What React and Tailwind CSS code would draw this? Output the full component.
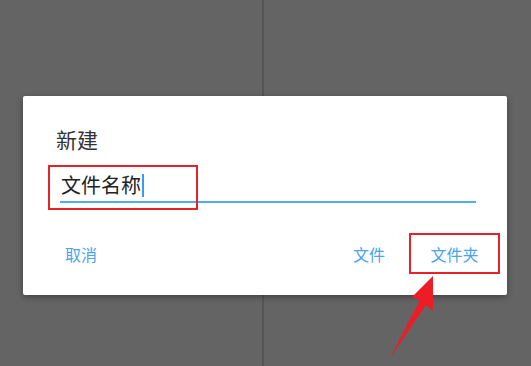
import React from "react";

export default function App() {
  return (
    <div
      className="relative w-[531px] h-[366px] overflow-hidden bg-[#646464]"
      style={{ fontFamily: '"Noto Sans CJK SC", "Noto Sans", sans-serif' }}
    >
      {/* background panels */}
      <div className="flex h-full">
        <div className="w-[264px] h-full border-r-[2px] border-[#555555]" />
        <div className="flex-1 h-full" />
      </div>

      {/* dialog */}
      <div className="absolute left-[23px] top-[96px] w-[484px] h-[199px] bg-white rounded-[2px] shadow-[0_2px_6px_rgba(0,0,0,0.35)] flex flex-col">
        <div className="pl-[33px] pt-[28px] text-[21px] leading-[30px] text-[#333333]">新建</div>
        <div className="relative mt-[15px] ml-[37px] mr-[31px] h-[34px] border-b-2 border-[#53a9f3] flex items-center">
          <span className="text-[20px] leading-[28px] text-[#222222] ml-[1px]">文件名称</span>
          <span className="w-[2px] h-[23px] bg-[#3d9bf0] ml-[1px]" />
          <div className="absolute left-[-12px] top-[-4px] w-[150px] h-[45px] border-2 border-[#e5242a]" />
        </div>
        <div className="flex items-center mt-[30px] pl-[42px] pr-[7px] text-[16px] text-[#4aa3ef]">
          <span>取消</span>
          <span className="ml-auto">文件</span>
          <div className="relative ml-[24px] w-[91px] h-[41px] flex items-center justify-center">
            <span>文件夹</span>
            <div className="absolute inset-0 border-2 border-[#e5242a]" />
          </div>
        </div>
      </div>

      {/* red arrow annotation */}
      <svg className="absolute left-0 top-0" width="531" height="366" viewBox="0 0 531 366">
        <polygon
          points="433,276 412,297 420,300 390,358 426,305 433,311"
          fill="#ee1c25"
        />
      </svg>
    </div>
  );
}
